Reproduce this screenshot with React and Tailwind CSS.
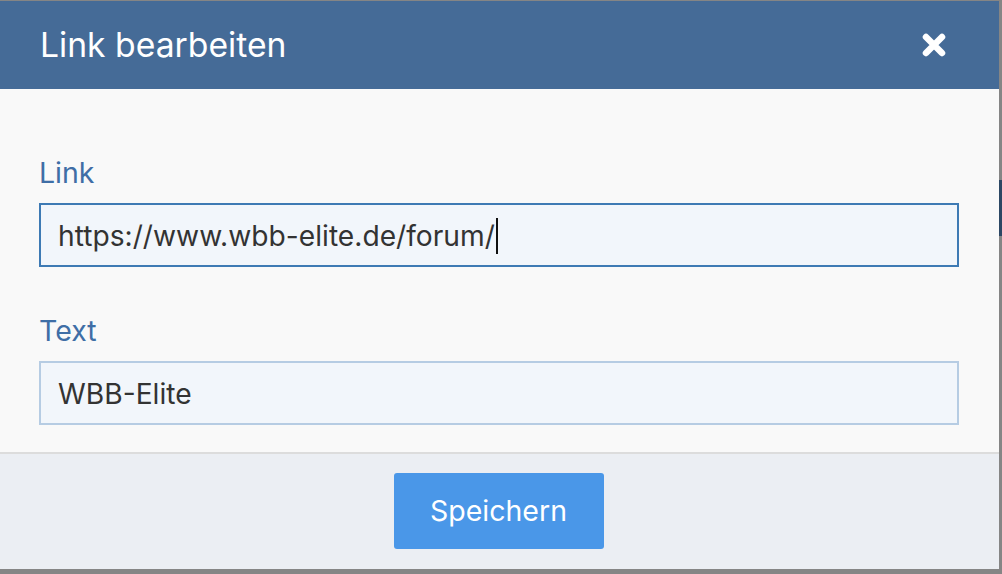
import React from 'react';

// --- Close icon (thick X) ---
const CloseIcon = () => (
  <svg width="24" height="24" viewBox="0 0 24 24" fill="none">
    <path d="M4 4 L20 20 M20 4 L4 20" stroke="#ffffff" strokeWidth="6.5" strokeLinecap="round" />
  </svg>
);

const Field = ({ label, value, focused, className = '' }) => (
  <div className={className}>
    <label className="block text-[28.5px] leading-[36px] text-[#3f6ea6] mb-3">{label}</label>
    <div
      className={
        'h-[64px] flex items-center pl-[17px] bg-[#f2f6fb] border-2 text-[28.2px] text-[#333333] ' +
        (focused ? 'border-[#3e7ab4]' : 'border-[#b6cce3]')
      }
    >
      <span className="pt-[4px]">{value}</span>
      {focused && <span className="ml-[1px] mt-[3px] w-[2px] h-[36px] bg-[#111111]" />}
    </div>
  </div>
);

export default function App() {
  return (
    <div
      className="w-[1002px] h-[574px] bg-[#858585] pt-[1px] flex overflow-hidden"
      style={{ fontFamily: 'Inter, "Noto Sans", sans-serif' }}
    >
      <div className="w-[999px] h-[568px] flex flex-col">
        {/* --- Header --- */}
        <div className="h-[88px] bg-[#456b97] flex items-center justify-between pl-[40px] pr-[53px]">
          <h1 className="text-[33.7px] leading-none text-white">Link bearbeiten</h1>
          <button type="button" className="flex">
            <CloseIcon />
          </button>
        </div>

        {/* --- Body --- */}
        <div className="flex-1 bg-[#f9f9f9] pt-[66px] pb-[27px] pl-[39px] pr-[40px]">
          <Field label="Link" value="https://www.wbb-elite.de/forum/" focused />
          <Field label="Text" value="WBB-Elite" className="mt-[46px]" />
        </div>

        {/* --- Footer --- */}
        <div className="h-[118px] bg-[#ebeef3] border-t-2 border-[#dcdcdc] flex items-center justify-center">
          <button
            type="button"
            className="w-[210px] h-[76px] rounded-[3px] bg-[#4a97e8] text-white text-[28.5px] -translate-x-[1px]"
          >
            Speichern
          </button>
        </div>
      </div>

      {/* --- Background peeking out on the right --- */}
      <div className="flex-1 flex flex-col">
        <div className="h-[179px]" />
        <div className="h-[56px] bg-[#2c4764]" />
      </div>
    </div>
  );
}
